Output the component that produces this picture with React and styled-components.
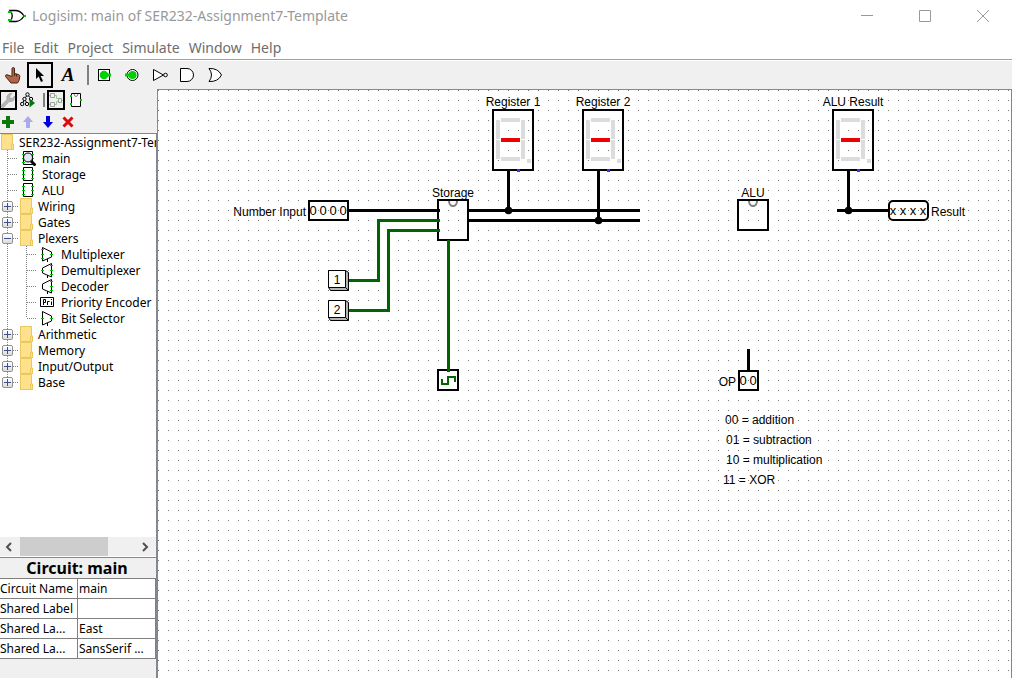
import React from 'react'
import styled, { createGlobalStyle } from 'styled-components'

const GlobalStyle = createGlobalStyle`
    * {
        box-sizing: border-box;
    }
    body {
        margin: 0;
        background: #ffffff;
    }
    button {
        border: none;
        background: none;
        padding: 0;
        margin: 0;
        font: inherit;
        color: inherit;
    }
    svg {
        display: block;
        flex: none;
    }
`
const Window = styled.div`
    height: 100vh;
    display: flex;
    flex-direction: column;
    overflow: hidden;
    font-family: "Noto Sans", "Open Sans", sans-serif;
    font-size: 12px;
    color: #000000;
`
const TitleBar = styled.header`
    height: 34px;
    flex: none;
    display: flex;
    align-items: center;
    padding: 0 0 2px 8px;
`
const Title = styled.h1`
    margin: 0;
    margin-left: 6px;
    flex: 1;
    font-size: 14px;
    font-weight: 400;
    line-height: 32px;
    color: #999999;
    white-space: nowrap;
`
const WindowButton = styled.button`
    width: 58px;
    height: 32px;
    display: flex;
    align-items: center;
    justify-content: center;
`
const MenuBar = styled.nav`
    height: 26px;
    flex: none;
    display: flex;
    align-items: center;
    gap: 9px;
    padding: 2px 0 0 2px;
    border-bottom: 1px solid #a0a0a0;
    font-size: 14px;
    color: #6d6d6d;
`
const Toolbar = styled.div`
    height: 29px;
    flex: none;
    display: flex;
    align-items: center;
    gap: 2px;
    margin-left: -1px;
    border-top: 1px solid #ffffff;
    background: #f0f0f0;
`
const ToolButton = styled.button`
    width: ${props => props.$small ? '18px' : '26px'};
    height: ${props => props.$small ? '20px' : '26px'};
    flex: none;
    display: flex;
    align-items: center;
    justify-content: center;
    border: 2px solid ${props => props.$active ? '#000000' : 'transparent'};
`
const Separator = styled.div`
    width: 2px;
    height: ${props => props.$small ? '14px' : '20px'};
    margin-left: 4px;
    background: #808080;
`
const Body = styled.div`
    flex: 1;
    min-height: 0;
    display: grid;
    grid-template-columns: 157px 1fr;
    background: #f0f0f0;
`
const Sidebar = styled.aside`
    min-width: 0;
    min-height: 0;
    display: flex;
    flex-direction: column;
    padding-top: 1px;
    overflow: hidden;
`
const SideTools = styled.div`
    height: ${props => props.$tall ? '23px' : '20px'};
    flex: none;
    display: flex;
    align-items: center;
    gap: 2px;
    margin-left: -1px;
`
const Explorer = styled.div`
    flex: 1;
    min-height: 0;
    display: flex;
    flex-direction: column;
    overflow: hidden;
    background: #ffffff;
    border: solid #828790;
    border-width: 1px 1px 1px 0;
`
const TreeScroll = styled.div`
    flex: 1;
    min-height: 0;
    overflow: hidden;
`
const Branch = styled.ul`
    list-style: none;
    margin: 0;
    padding: 0;
    background: repeating-linear-gradient(to bottom, #808080 0 1px, transparent 1px 2px) no-repeat;
    background-size: 1px calc(100% - 8px);
    background-position: ${props => props.$nested ? '26px 0' : '7px 0'};
`
const TreeRow = styled.div`
    height: 16px;
    display: flex;
    align-items: center;
    line-height: 16px;
    white-space: nowrap;
    padding-left: ${props => props.$indent || 0}px;
`
const Stub = styled.span`
    width: ${props => props.$width}px;
    height: 1px;
    flex: none;
    margin-right: ${props => props.$gap}px;
    background: repeating-linear-gradient(to right, #808080 0 1px, transparent 1px 2px);
`
const Handle = styled.button`
    width: 11px;
    height: 11px;
    flex: none;
    display: flex;
    align-items: center;
    justify-content: center;
    border: 1px solid #919191;
    border-radius: 2px;
    background: linear-gradient(#ffffff, #dcdcdc);
`
const TreeLabel = styled.span`
    margin-top: 2px;
    margin-left: ${props => props.$gap}px;
`
const ScrollBar = styled.div`
    height: 20px;
    flex: none;
    display: flex;
    align-items: stretch;
    background: #f0f0f0;
    border-bottom: 1px solid #ffffff;
`
const ScrollArrow = styled.button`
    width: 20px;
    display: flex;
    align-items: center;
    justify-content: center;
`
const ScrollTrack = styled.div`
    flex: 1;
`
const ScrollThumb = styled.div`
    width: 76%;
    height: 100%;
    background: #cdcdcd;
`
const Attributes = styled.section`
    flex: none;
    padding-bottom: 19px;
    border-right: 1px solid #828790;
`
const AttributesTitle = styled.h2`
    margin: 0;
    height: 20px;
    line-height: 20px;
    font-size: 16px;
    font-weight: 700;
    text-align: center;
    padding-right: 2px;
`
const AttributeTable = styled.table`
    width: 100%;
    table-layout: fixed;
    border-collapse: separate;
    border-spacing: 0;
    border-top: 1px solid #808080;
    background: #ffffff;

    th, td {
        height: 20px;
        padding: 0 1px 0 0;
        border: solid #808080;
        border-width: 0 1px 1px 0;
        font-weight: 400;
        line-height: 19px;
        text-align: left;
        white-space: nowrap;
    }
    th {
        width: 78px;
    }
    td {
        padding-left: 1px;
    }
`
const Canvas = styled.main`
    min-width: 0;
    overflow: hidden;
    background: #ffffff;
    border: solid #828790;
    border-width: 1px 1px 0 1px;
`
const Drawing = styled.svg`
    width: 100%;
    height: 100%;
    font-family: "Liberation Sans", Arial, sans-serif;
    font-size: 12px;
`
const BitText = styled.text`
    font-size: 13px;
`

/* ---------- icons ---------- */

const LogoIcon = () => (
    <svg width="18" height="16" viewBox="0 0 18 16" fill="none">
        <path d="M2 2.500h6q5 .5 8 5.500q-3 5-8 5.500H2q4.500-5.500 0-11z" stroke="#000" strokeWidth="1.300" />
        <path d="M0 4h4M0 12h4M15.500 8H18" stroke="#00c800" strokeWidth="2" />
    </svg>
)

const HandIcon = () => (
    <svg width="18" height="18" viewBox="0 0 18 18">
        <path d="M9 10.500V3q0-1.500 1.300-1.500T11.500 3v4.500l4 1q1.500.5 1.300 2l-.8 4-1.500 2.500H8l-2.500-3L2.500 10.500q-.3-1.800 1.500-1.800z" fill="#b0644a" stroke="#4a2012" />
        <path d="M11.500 7.500v2.500M13.500 8v2.500" stroke="#4a2012" fill="none" />
    </svg>
)

const ArrowIcon = () => (
    <svg width="12" height="16" viewBox="0 0 12 16">
        <path d="M2 1v11l2.700-2.500L7 15l2-1-2.400-5H10z" fill="#000" />
    </svg>
)

const LetterIcon = styled.span`
    font-family: "Liberation Serif", serif;
    font-size: 19px;
    line-height: 20px;
    font-weight: 700;
    font-style: italic;
`

const PinIcon = () => (
    <svg width="14" height="14" viewBox="0 0 14 14">
        <rect x="1.500" y="1.500" width="11" height="11" fill="#fff" stroke="#000" />
        <circle cx="7" cy="7" r="4.300" fill="#00d200" />
        <path d="M10 7h4" stroke="#00d200" strokeWidth="3" />
    </svg>
)

const OutputIcon = () => (
    <svg width="14" height="14" viewBox="0 0 14 14">
        <circle cx="7.500" cy="7" r="5.500" fill="#fff" stroke="#000" />
        <circle cx="7.500" cy="7" r="4" fill="#00d200" />
        <path d="M0 7h4" stroke="#00d200" strokeWidth="3" />
    </svg>
)

const NotIcon = () => (
    <svg width="16" height="14" viewBox="0 0 16 14" fill="#fff" stroke="#000">
        <path d="M1.500 1.500v11L11.500 7z" />
        <circle cx="13.500" cy="7" r="1.800" />
    </svg>
)

const AndIcon = () => (
    <svg width="16" height="14" viewBox="0 0 16 14" fill="#fff" stroke="#000">
        <path d="M.5 .5H7a6.500 6.500 0 0 1 0 13H.5z" />
    </svg>
)

const OrIcon = () => (
    <svg width="16" height="14" viewBox="0 0 16 14" fill="#fff" stroke="#000">
        <path d="M1 .5q9-.5 12.500 6.500Q10 14 1 13.500q5-6.500 0-13z" />
    </svg>
)

const WrenchIcon = () => (
    <svg width="16" height="16" viewBox="0 0 16 16">
        <path d="M1 13.500 7 7.500Q6 4 8.500 2.200 10 1 12 1.500L9.800 4l.4 2 2 .5L14.500 4q1 2.500-1 4.500-1.700 1.600-4.300 1L3.500 15.500Q1.500 16 1 13.500z" fill="#b4b4b4" stroke="#9c9c9c" strokeWidth=".6" />
    </svg>
)

const SimulateTreeIcon = () => (
    <svg width="16" height="16" viewBox="0 0 16 16" fill="none" stroke="#000">
        <circle cx="7.500" cy="2.500" r="1.700" />
        <circle cx="4.500" cy="7" r="1.700" />
        <circle cx="11" cy="7" r="1.700" />
        <circle cx="2.200" cy="12" r="1.700" />
        <circle cx="7" cy="12" r="1.700" />
        <path d="M6.500 4 5.500 5.500M8.700 4l1.500 1.700M4 8.500 3 10.500M5.500 8.500 6.500 10.500" />
        <path d="M9.500 6.500v9l5.500-4.500z" fill="#00780a" stroke="none" />
    </svg>
)

const LayoutIcon = () => (
    <svg width="14" height="16" viewBox="0 0 14 16" fill="none">
        <path d="M5.500 3.500h2v3h2M5.500 12.500h2v-3h2M13 8.500h1M0 3.500h1M0 12.500h1" stroke="#8fd08f" />
        <path d="M1.500 1.500h4v4h-4zM1.500 10.500h4v4h-4zM9.500 6.500h3v4h-3z" stroke="#a0a0a0" />
    </svg>
)

const AppearanceIcon = () => (
    <svg width="14" height="16" viewBox="0 0 14 16" fill="none">
        <path d="M2.500 1.500h9v13h-9z" fill="#fff" stroke="#000" />
        <path d="M5 2q.5 2.500 2 2.500T9 2" stroke="#808080" />
        <path d="M1 4h2M1 12h2M11 8h2" stroke="#00c800" strokeWidth="2" />
    </svg>
)

const PlusIcon = () => (
    <svg width="14" height="14" viewBox="0 0 14 14">
        <path d="M5 1h4v4h4v4H9v4H5V9H1V5h4z" fill="#0a780a" />
    </svg>
)

const VerticalArrow = ({ color, down }) => (
    <svg width="12" height="14" viewBox="0 0 12 14">
        <path d={down ? 'M4 1h4v6h3l-5 6-5-6h3z' : 'M6 1l5 6H8v6H4V7H1z'} fill={color} />
    </svg>
)

const DeleteIcon = () => (
    <svg width="12" height="14" viewBox="0 0 12 14">
        <path d="m1.500 2.500 9 9M10.500 2.500l-9 9" stroke="#dc0a0a" strokeWidth="3" />
    </svg>
)

const FolderIcon = () => (
    <svg width="13" height="16" viewBox="0 0 13 16">
        <path d="M0 1h12v9h1v6H0z" fill="#ffe08c" />
        <path d="M.5 15.500V.5h11v9.500M10.500 15V10h2v5.500H0" fill="none" stroke="#ebc85a" />
    </svg>
)

const CircuitIcon = ({ current }) => (
    <svg width="14" height="16" viewBox="0 0 14 16" fill="none">
        <path d="M1.500 1.500h9v13h-9z" fill="#fff" stroke="#000" />
        <path d="M0 4.500h3M0 8.500h3M0 12.500h3M9 4.500h3M9 8.500h3M9 12.500h3" stroke="#00c800" />
        {current && <circle cx="6" cy="7.500" r="4.500" fill="#e4e4f8" stroke="#000" />}
        {current && <path d="M9 11l4.500 4.500" stroke="#000" strokeWidth="3" />}
    </svg>
)

const PlexerIcon = ({ kind }) => {
    if (kind === 'encoder') {
        return (
            <svg width="16" height="16" viewBox="0 0 16 16">
                <path d="M1.500 3.500h13v9h-13z" fill="#fff" stroke="#000" />
                <path d="M4.500 11V5.500h2v3h-2M8.500 11V7.500h2M12.500 11V7.500M12.500 5v1" fill="none" stroke="#000" />
            </svg>
        )
    }
    const wideLeft = kind === 'mux' || kind === 'selector'
    return (
        <svg width="16" height="16" viewBox="0 0 16 16" fill="none">
            <path d={wideLeft ? 'M3.500 1.500l9 4.500v5l-9 4z' : 'M12.500 1.500l-9 4.500v5l9 4z'} stroke="#000" />
            <path d="M8.500 13v3" stroke="#000" />
            {kind === 'mux' && <path d="M2 3.500h3M2 8.500h3M2 12.500h3M11 8.500h3" stroke="#00c800" />}
            {kind === 'selector' && <path d="M2 8.500h3M11 8.500h3" stroke="#00c800" />}
            {kind === 'demux' && <path d="M11 3.500h3M11 8.500h3M11 12.500h3M2 8.500h3" stroke="#00c800" />}
            {kind === 'decoder' && <path d="M11 3.500h3M11 8.500h3M11 12.500h3" stroke="#00c800" />}
        </svg>
    )
}

/* ---------- sidebar ---------- */

const circuits = ['main', 'Storage', 'ALU']
const libraries = [
    { name: 'Wiring' },
    { name: 'Gates' },
    {
        name: 'Plexers',
        tools: [
            { name: 'Multiplexer', kind: 'mux' },
            { name: 'Demultiplexer', kind: 'demux' },
            { name: 'Decoder', kind: 'decoder' },
            { name: 'Priority Encoder', kind: 'encoder' },
            { name: 'Bit Selector', kind: 'selector' },
        ],
    },
    { name: 'Arithmetic' },
    { name: 'Memory' },
    { name: 'Input/Output' },
    { name: 'Base' },
]
const attributes = [
    ['Circuit Name', 'main'],
    ['Shared Label', ''],
    ['Shared La...', 'East'],
    ['Shared La...', 'SansSerif ...'],
]

function Library({ name, tools }) {
    return (
        <li>
            <TreeRow $indent={2}>
                <Handle aria-label={`Toggle ${name}`}>
                    <svg width="7" height="7" viewBox="0 0 7 7">
                        <path d={tools ? 'M0 3.500h7' : 'M0 3.500h7M3.500 0v7'} stroke="#3c508c" />
                    </svg>
                </Handle>
                <Stub $width={5} $gap={2} />
                <FolderIcon />
                <TreeLabel $gap={5}>{name}</TreeLabel>
            </TreeRow>
            {tools &&
                <Branch $nested>
                    {tools.map(tool => (
                        <li key={tool.name}>
                            <TreeRow $indent={27}>
                                <Stub $width={9} $gap={3} />
                                <PlexerIcon kind={tool.kind} />
                                <TreeLabel $gap={6}>{tool.name}</TreeLabel>
                            </TreeRow>
                        </li>
                    ))}
                </Branch>
            }
        </li>
    )
}

function ProjectTree() {
    return (
        <Explorer>
            <TreeScroll>
                <TreeRow $indent={1}>
                    <FolderIcon />
                    <TreeLabel $gap={5}>SER232-Assignment7-Template</TreeLabel>
                </TreeRow>
                <Branch>
                    {circuits.map(name => (
                        <li key={name}>
                            <TreeRow $indent={8}>
                                <Stub $width={10} $gap={4} />
                                <CircuitIcon current={name === 'main'} />
                                <TreeLabel $gap={6}>{name}</TreeLabel>
                            </TreeRow>
                        </li>
                    ))}
                    {libraries.map(library => <Library key={library.name} {...library} />)}
                </Branch>
            </TreeScroll>
            <ScrollBar>
                <ScrollArrow aria-label="Scroll left">
                    <svg width="10" height="10" viewBox="0 0 10 10"><path d="M6 1 2 5l4 4" fill="none" stroke="#505050" strokeWidth="2" /></svg>
                </ScrollArrow>
                <ScrollTrack><ScrollThumb /></ScrollTrack>
                <ScrollArrow aria-label="Scroll right">
                    <svg width="10" height="10" viewBox="0 0 10 10"><path d="m2 1 4 4-4 4" fill="none" stroke="#505050" strokeWidth="2" /></svg>
                </ScrollArrow>
            </ScrollBar>
        </Explorer>
    )
}

function AttributePanel() {
    return (
        <Attributes>
            <AttributesTitle>Circuit: main</AttributesTitle>
            <AttributeTable>
                <tbody>
                    {attributes.map(([name, value], i) => (
                        <tr key={i}>
                            <th scope="row">{name}</th>
                            <td>{value}</td>
                        </tr>
                    ))}
                </tbody>
            </AttributeTable>
        </Attributes>
    )
}

/* ---------- circuit, drawn on a 10px grid ---------- */

const GREEN = '#006400'

const Wire = ({ d, color = '#000000' }) => (
    <path d={d} transform="translate(.5 .5)" fill="none" stroke={color} strokeWidth="3" strokeLinecap="square" />
)

const Junction = ({ x, y }) => <circle cx={x + 0.5} cy={y + 0.5} r="3.800" />

const Subcircuit = ({ x, y, height, label }) => (
    <g>
        <rect x={x} y={y} width="30" height={height} fill="none" stroke="#000" strokeWidth="2" />
        <path d={`M${x + 11} ${y + 1}a4 5 0 0 0 8 0`} fill="none" stroke="#808080" strokeWidth="2" />
        <text x={x + 15} y={y - 3} textAnchor="middle">{label}</text>
    </g>
)

const HexDisplay = ({ x, y, label }) => (
    <g>
        <text x={x + 20} y={y - 4} textAnchor="middle">{label}</text>
        <rect x={x} y={y} width="40" height="60" fill="none" stroke="#000" strokeWidth="2" />
        <path
            transform={`translate(${x} ${y})`}
            d="M8 8h19v4H8zM3 10h4v19H3zM28 10h4v19h-4zM3 30h4v19H3zM28 30h4v19h-4zM8 47h19v4H8zM34 49h4v4h-4z"
            fill="#dcdcdc"
        />
        <rect x={x + 8} y={y + 28} width="19" height="4" fill="#f00000" />
        <rect x={x + 24} y={y + 59} width="3" height="3" fill="#3232ff" />
    </g>
)

const Pin = ({ x, y, bits, output }) => (
    <g>
        <rect x={x + 1} y={y + 1} width={bits.length * 10 - 1} height="19" rx={output ? 4 : 0} fill="none" stroke="#000" strokeWidth="2" />
        {bits.split('').map((bit, i) => (
            <BitText key={i} x={x + 5 + i * 10} y={y + 15} textAnchor="middle">{bit}</BitText>
        ))}
    </g>
)

const PushButton = ({ x, y, label }) => (
    <g transform={`translate(${x} ${y})`}>
        <path d="M.5 17.500l2 3h18v-18l-3-2z" fill="#b4b4b4" stroke="#000" />
        <path d="M.5 .5h17v17H.5zM17.500 17.500l3 3" fill="#fff" stroke="#000" />
        <text x="9" y="14" textAnchor="middle">{label}</text>
    </g>
)

const Clock = ({ x, y }) => (
    <g transform={`translate(${x} ${y})`} fill="none" strokeWidth="2">
        <rect width="20" height="20" stroke="#000" />
        <path d="M4 9v5h6V7h7v5" stroke={GREEN} />
    </g>
)

function Circuit() {
    return (
        <Drawing role="img" aria-label="Circuit main">
            <defs>
                <pattern id="grid" width="10" height="10" patternUnits="userSpaceOnUse">
                    <rect width="1" height="1" fill="#777777" />
                </pattern>
            </defs>
            <rect width="100%" height="100%" fill="url(#grid)" />

            <Subcircuit x={280} y={110} height={40} label="Storage" />
            <Subcircuit x={580} y={110} height={30} label="ALU" />
            <HexDisplay x={335} y={20} label="Register 1" />
            <HexDisplay x={425} y={20} label="Register 2" />
            <HexDisplay x={675} y={20} label="ALU Result" />
            <Clock x={280} y={280} />

            <Wire d="M191 120H280" />
            <Wire d="M310 120H480" />
            <Wire d="M310 130H480" />
            <Wire d="M350 81V120" />
            <Wire d="M440 81V130" />
            <Wire d="M690 81V120M680 120H730" />
            <Wire d="M590 260V280" />
            <Junction x={350} y={120} />
            <Junction x={440} y={130} />
            <Junction x={690} y={120} />
            <Wire d="M190 190H220V130H280" color={GREEN} />
            <Wire d="M190 220H230V140H280" color={GREEN} />
            <Wire d="M290 151V280" color={GREEN} />

            <Pin x={150} y={110} bits="0000" />
            <text x="148" y="126" textAnchor="end">Number Input</text>
            <Pin x={730} y={110} bits="xxxx" output />
            <text x="773" y="126">Result</text>
            <Pin x={580} y={280} bits="00" />
            <text x="578" y="296" textAnchor="end">OP</text>
            <PushButton x={170} y={180} label="1" />
            <PushButton x={170} y={210} label="2" />

            <text x="567" y="334">00 = addition</text>
            <text x="568" y="354">01 = subtraction</text>
            <text x="568" y="374">10 = multiplication</text>
            <text x="565" y="394">11 = XOR</text>
        </Drawing>
    )
}

export default function App() {
    return (
        <Window>
            <GlobalStyle />
            <TitleBar>
                <LogoIcon />
                <Title>Logisim: main of SER232-Assignment7-Template</Title>
                <WindowButton aria-label="Minimize">
                    <svg width="12" height="12" viewBox="0 0 12 12"><path d="M0 5.500h12" stroke="#999" /></svg>
                </WindowButton>
                <WindowButton aria-label="Maximize">
                    <svg width="12" height="12" viewBox="0 0 12 12"><path d="M.5 .5h11v11H.5z" fill="none" stroke="#999" /></svg>
                </WindowButton>
                <WindowButton aria-label="Close">
                    <svg width="12" height="12" viewBox="0 0 12 12"><path d="m0 0 12 12M12 0 0 12" stroke="#999" /></svg>
                </WindowButton>
            </TitleBar>
            <MenuBar>
                {['File', 'Edit', 'Project', 'Simulate', 'Window', 'Help'].map(item => (
                    <button key={item}>{item}</button>
                ))}
            </MenuBar>
            <Toolbar>
                <ToolButton aria-label="Poke"><HandIcon /></ToolButton>
                <ToolButton aria-label="Select" $active><ArrowIcon /></ToolButton>
                <ToolButton aria-label="Text"><LetterIcon>A</LetterIcon></ToolButton>
                <Separator />
                <ToolButton aria-label="Input pin"><PinIcon /></ToolButton>
                <ToolButton aria-label="Output pin"><OutputIcon /></ToolButton>
                <ToolButton aria-label="NOT gate"><NotIcon /></ToolButton>
                <ToolButton aria-label="AND gate"><AndIcon /></ToolButton>
                <ToolButton aria-label="OR gate"><OrIcon /></ToolButton>
            </Toolbar>
            <Body>
                <Sidebar>
                    <SideTools>
                        <ToolButton aria-label="Toolbox" $small $active><WrenchIcon /></ToolButton>
                        <ToolButton aria-label="Simulation tree" $small><SimulateTreeIcon /></ToolButton>
                        <Separator $small />
                        <ToolButton aria-label="Edit layout" $small $active><LayoutIcon /></ToolButton>
                        <ToolButton aria-label="Edit appearance" $small><AppearanceIcon /></ToolButton>
                    </SideTools>
                    <SideTools $tall>
                        <ToolButton aria-label="Add circuit" $small><PlusIcon /></ToolButton>
                        <ToolButton aria-label="Move up" $small><VerticalArrow color="#a9a9ee" /></ToolButton>
                        <ToolButton aria-label="Move down" $small><VerticalArrow color="#0000dc" down /></ToolButton>
                        <ToolButton aria-label="Remove circuit" $small><DeleteIcon /></ToolButton>
                    </SideTools>
                    <ProjectTree />
                    <AttributePanel />
                </Sidebar>
                <Canvas>
                    <Circuit />
                </Canvas>
            </Body>
        </Window>
    )
}
